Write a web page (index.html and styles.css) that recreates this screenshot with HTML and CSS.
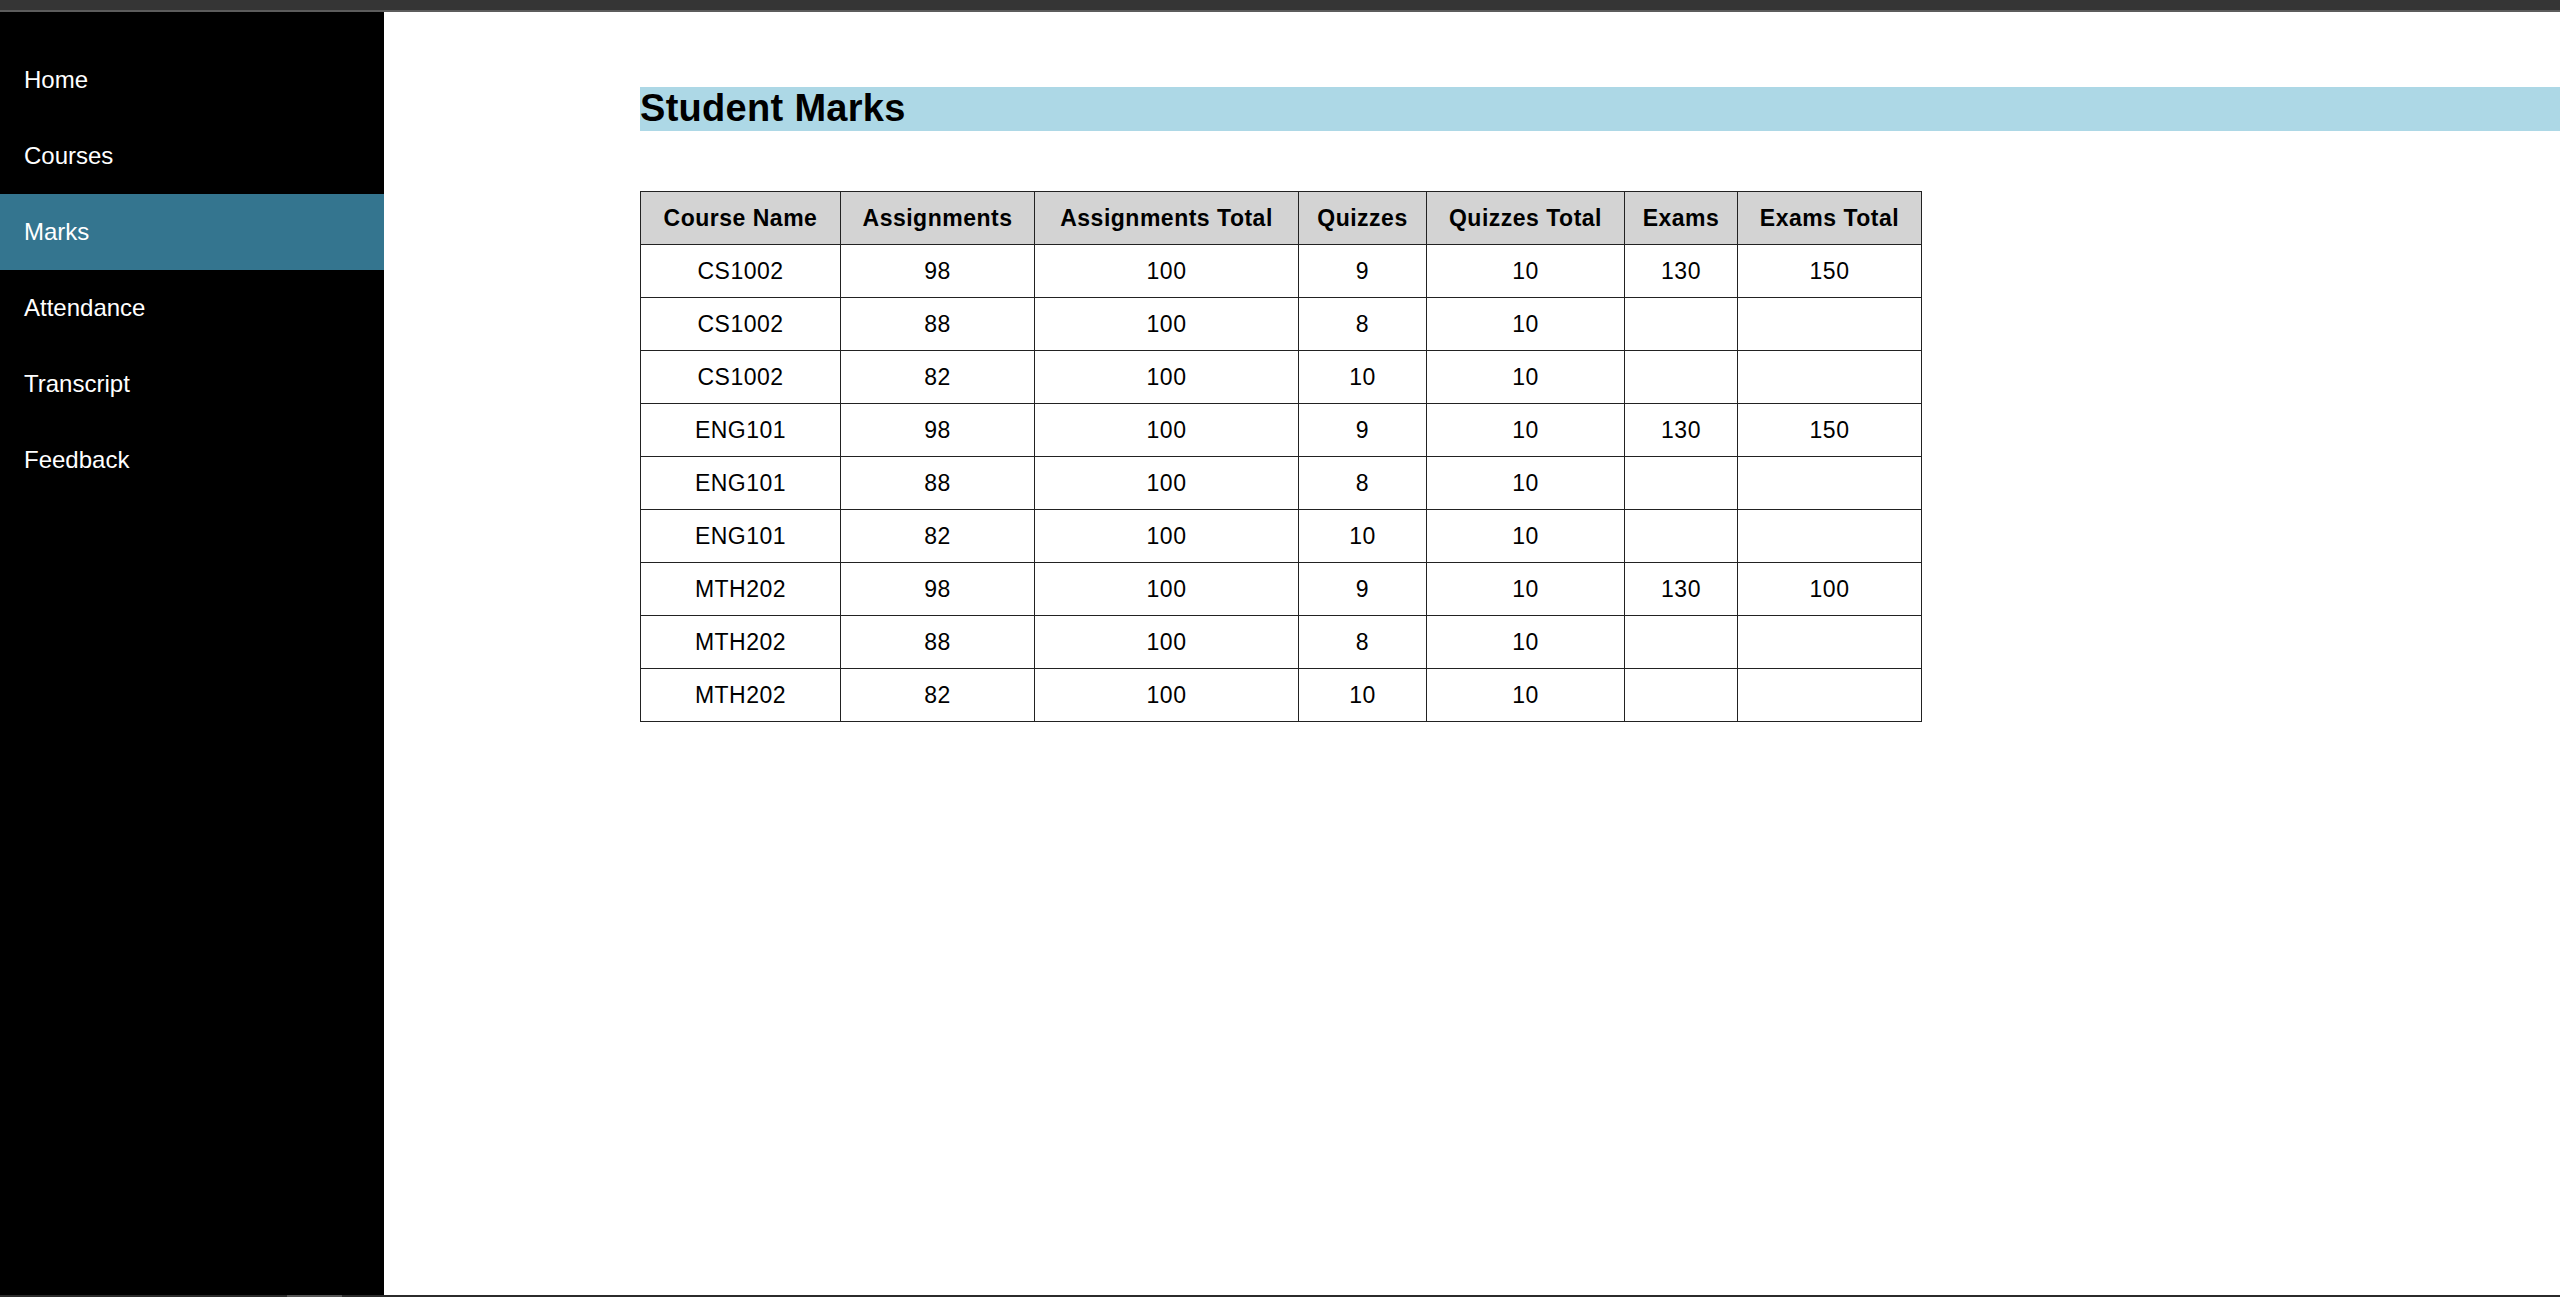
FILE: index.html
```html
<!DOCTYPE html>
<html lang="en">
<head>
<meta charset="utf-8">
<title>Student Marks</title>
<link rel="stylesheet" href="styles.css">
</head>
<body>
<div class="topbar"></div>
<div class="layout">
  <nav class="sidebar">
    <a class="nav-item" href="#">Home</a>
    <a class="nav-item" href="#">Courses</a>
    <a class="nav-item active" href="#">Marks</a>
    <a class="nav-item" href="#">Attendance</a>
    <a class="nav-item" href="#">Transcript</a>
    <a class="nav-item" href="#">Feedback</a>
  </nav>
  <main class="main">
    <h1 class="page-title">Student Marks</h1>
    <table class="marks">
      <colgroup>
        <col class="c1"><col class="c2"><col class="c3"><col class="c4"><col class="c5"><col class="c6"><col class="c7">
      </colgroup>
      <thead>
        <tr><th>Course Name</th><th>Assignments</th><th>Assignments Total</th><th>Quizzes</th><th>Quizzes Total</th><th>Exams</th><th>Exams Total</th></tr>
      </thead>
      <tbody>
        <tr><td>CS1002</td><td>98</td><td>100</td><td>9</td><td>10</td><td>130</td><td>150</td></tr>
        <tr><td>CS1002</td><td>88</td><td>100</td><td>8</td><td>10</td><td></td><td></td></tr>
        <tr><td>CS1002</td><td>82</td><td>100</td><td>10</td><td>10</td><td></td><td></td></tr>
        <tr><td>ENG101</td><td>98</td><td>100</td><td>9</td><td>10</td><td>130</td><td>150</td></tr>
        <tr><td>ENG101</td><td>88</td><td>100</td><td>8</td><td>10</td><td></td><td></td></tr>
        <tr><td>ENG101</td><td>82</td><td>100</td><td>10</td><td>10</td><td></td><td></td></tr>
        <tr><td>MTH202</td><td>98</td><td>100</td><td>9</td><td>10</td><td>130</td><td>100</td></tr>
        <tr><td>MTH202</td><td>88</td><td>100</td><td>8</td><td>10</td><td></td><td></td></tr>
        <tr><td>MTH202</td><td>82</td><td>100</td><td>10</td><td>10</td><td></td><td></td></tr>
      </tbody>
    </table>
  </main>
</div>
<div class="bottombar"><div class="thumb"></div></div>
</body>
</html>
```
FILE: styles.css
```css
html, body {
  margin: 0;
  padding: 0;
  height: 100%;
  overflow: hidden;
}
body {
  font-family: "Liberation Sans", Arial, sans-serif;
  background: #ffffff;
  color: #000000;
}
.topbar {
  height: 10px;
  background: #353535;
  border-bottom: 2px solid #5c5c5c;
}
.layout {
  display: flex;
  height: 1283px;
}
.sidebar {
  width: 384px;
  flex: 0 0 384px;
  background: #000000;
  padding-top: 30px;
  box-sizing: border-box;
  display: flex;
  flex-direction: column;
}
.nav-item {
  display: block;
  color: #ffffff;
  text-decoration: none;
  font-size: 24px;
  line-height: 28px;
  padding: 24px 24px;
}
.nav-item.active {
  background: #34758f;
}
.main {
  flex: 1;
  padding: 75px 0 0 256px;
  min-width: 0;
}
.page-title {
  margin: 0;
  background: #add8e6;
  font-size: 38px;
  font-weight: bold;
  line-height: 42px;
  padding-bottom: 2px;
  letter-spacing: 0.3px;
}
.marks {
  margin-top: 60px;
  border-collapse: collapse;
  table-layout: fixed;
  width: 1281px;
  font-size: 23px;
  letter-spacing: 0.5px;
}
.marks th, .marks td {
  border: 1px solid #222222;
  text-align: center;
  padding: 14px 0;
  line-height: 24px;
  white-space: nowrap;
}
.marks th {
  background: #d3d3d3;
  font-weight: bold;
}
.c1 { width: 200px; }
.c2 { width: 194px; }
.c3 { width: 264px; }
.c4 { width: 128px; }
.c5 { width: 198px; }
.c6 { width: 113px; }
.c7 { width: 184px; }
.bottombar {
  height: 2px;
  background: #2b2b2b;
  position: relative;
}
.bottombar .thumb {
  position: absolute;
  left: 287px;
  width: 55px;
  top: 0;
  height: 2px;
  background: #555555;
}
```
